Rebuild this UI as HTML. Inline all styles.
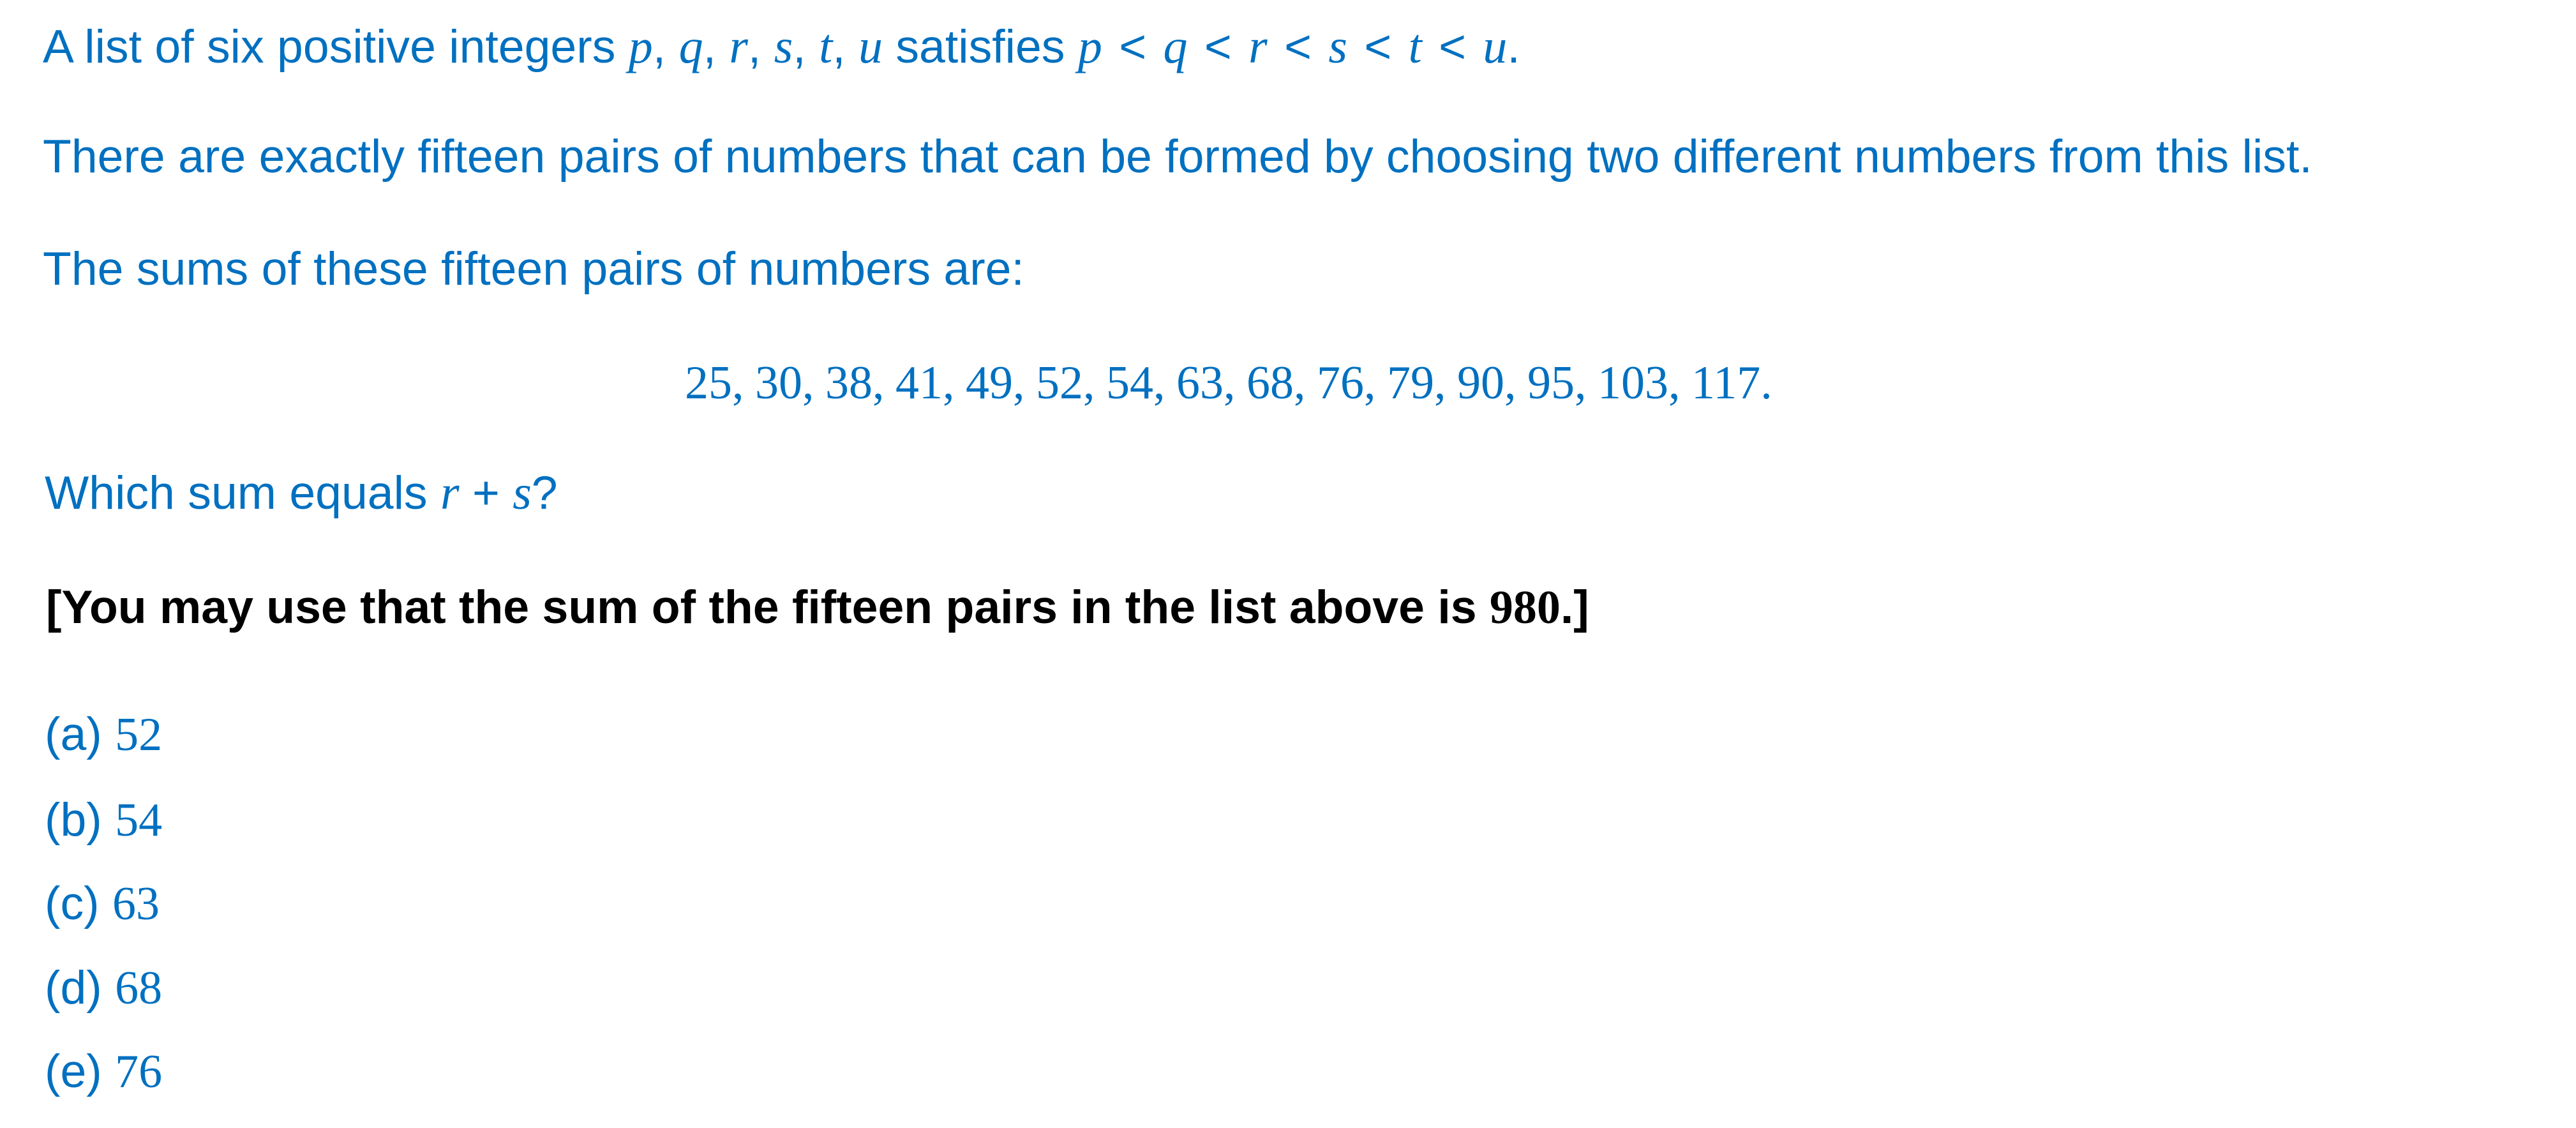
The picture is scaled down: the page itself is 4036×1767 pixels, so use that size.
<!DOCTYPE html>
<html><head><meta charset="utf-8"><style>
html,body{margin:0;padding:0;background:#fff;width:4036px;height:1767px;overflow:hidden;position:relative}
.l{position:absolute;left:67px;white-space:nowrap;font-family:"Liberation Sans",Arial,sans-serif;font-size:73.4px;line-height:74px;color:#0070C0}
.m{font-family:"Liberation Serif","DejaVu Serif",serif;font-style:italic;font-size:76px}
.n{font-family:"Liberation Serif","DejaVu Serif",serif;font-size:74px}
.b{color:#000;font-weight:bold}
.lt{margin:0 6px}
</style></head><body>
<div class="l" style="top:36px">A list of six positive integers <span class="m">p</span>, <span class="m">q</span>, <span class="m">r</span>, <span class="m">s</span>, <span class="m">t</span>, <span class="m">u</span> satisfies <span class="m">p</span><span class="lt"> &lt; </span><span class="m">q</span><span class="lt"> &lt; </span><span class="m">r</span><span class="lt"> &lt; </span><span class="m">s</span><span class="lt"> &lt; </span><span class="m">t</span><span class="lt"> &lt; </span><span class="m">u</span>.</div>
<div class="l" style="top:208px">There are exactly fifteen pairs of numbers that can be formed by choosing two different numbers from this list.</div>
<div class="l" style="top:384px">The sums of these fifteen pairs of numbers are:</div>
<div class="l n" style="top:563px;left:1073px;word-spacing:-1px">25, 30, 38, 41, 49, 52, 54, 63, 68, 76, 79, 90, 95, 103, 117.</div>
<div class="l" style="top:735px;left:70px">Which sum equals <span class="m">r</span> + <span class="m">s</span>?</div>
<div class="l b" style="top:914px;left:72px">[You may use that the sum of the fifteen pairs in the list above is <span class="n" style="font-weight:bold">980</span>.]</div>
<div class="l" style="top:1113px;left:70px">(a) <span class="n">52</span></div>
<div class="l" style="top:1247px;left:70px">(b) <span class="n">54</span></div>
<div class="l" style="top:1378px;left:70px">(c) <span class="n">63</span></div>
<div class="l" style="top:1510px;left:70px">(d) <span class="n">68</span></div>
<div class="l" style="top:1641px;left:70px">(e) <span class="n">76</span></div>
</body></html>
